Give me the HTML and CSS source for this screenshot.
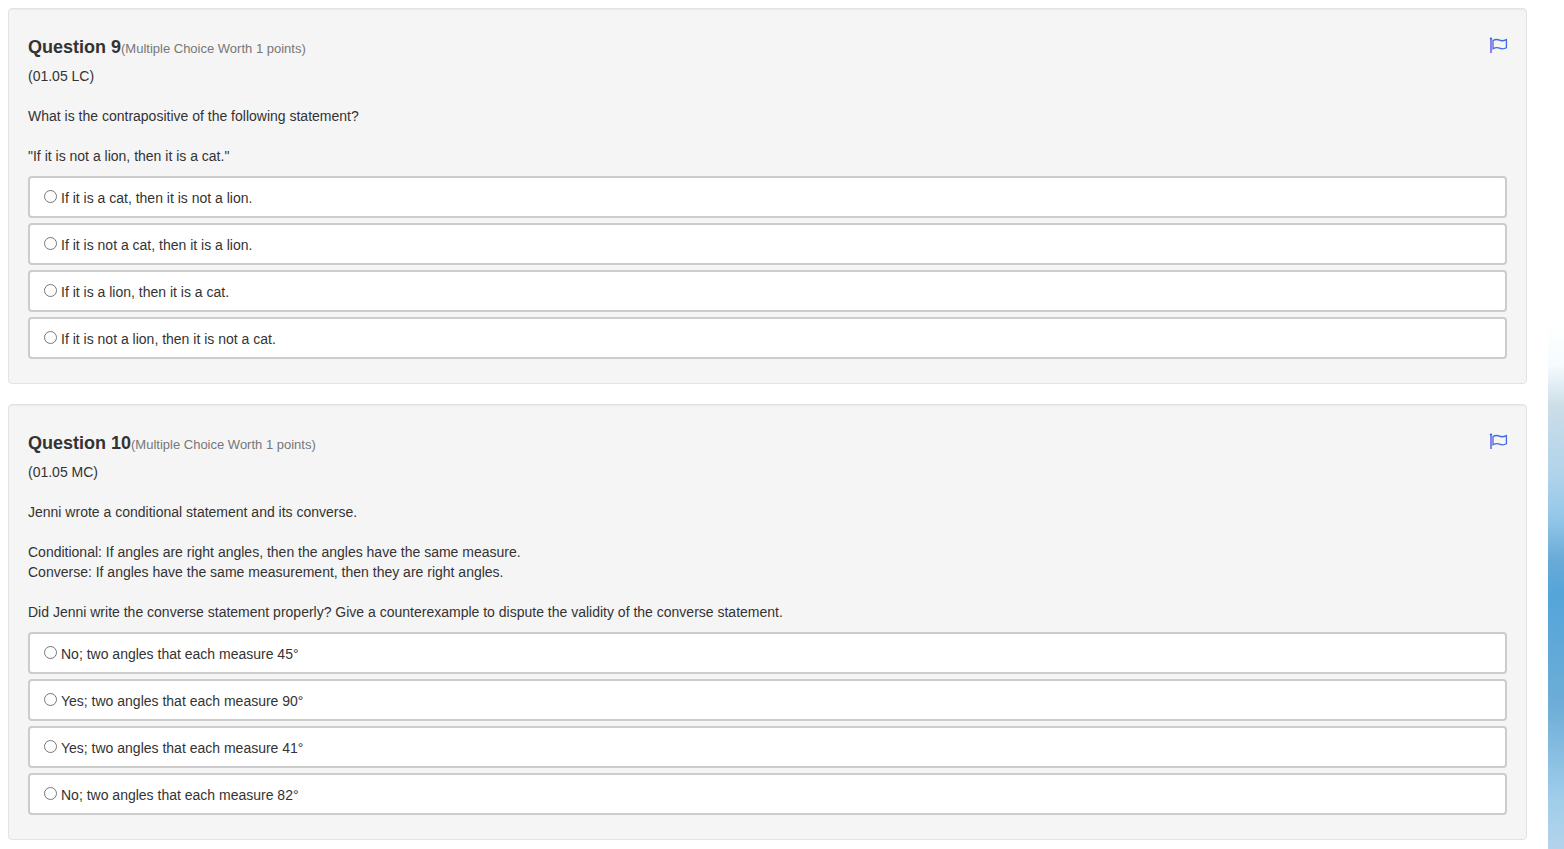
FILE: index.html
```
<!DOCTYPE html>
<html lang="en">

<head>
  <meta charset="UTF-8">
  <meta name="viewport" content="width=device-width, initial-scale=1.0">
  <title>Exam</title>
  <link rel="stylesheet" href="styles.css">
</head>

<body>
  <form class="exam">
    <section class="well">
      <header class="question-header">
        <h4>Question 9<small>(Multiple Choice Worth 1 points)</small></h4>
        <button type="button" class="flag" aria-label="Flag question 9">
          <svg width="18" height="16" viewBox="0 0 18 16">
            <path class="pole" d="M2 1V16" />
            <path d="M4 3.5C6.5 2 8.5 2.3 10.5 3.2S15 3.8 17.4 2.6V10.8C15 12.2 12.5 12 10.5 11.2S6.5 10.4 4 11.8Z" />
            <circle cx="2" cy="1.6" r="1.2" />
          </svg>
        </button>
      </header>
      <div class="question-text">
        (01.05 LC)<br><br>
        What is the contrapositive of the following statement?<br><br>
        "If it is not a lion, then it is a cat."
      </div>
      <label class="answer"><input type="radio" name="q9" value="a">If it is a cat, then it is not a lion.</label>
      <label class="answer"><input type="radio" name="q9" value="b">If it is not a cat, then it is a lion.</label>
      <label class="answer"><input type="radio" name="q9" value="c">If it is a lion, then it is a cat.</label>
      <label class="answer"><input type="radio" name="q9" value="d">If it is not a lion, then it is not a cat.</label>
    </section>

    <section class="well">
      <header class="question-header">
        <h4>Question 10<small>(Multiple Choice Worth 1 points)</small></h4>
        <button type="button" class="flag" aria-label="Flag question 10">
          <svg width="18" height="16" viewBox="0 0 18 16">
            <path class="pole" d="M2 1V16" />
            <path d="M4 3.5C6.5 2 8.5 2.3 10.5 3.2S15 3.8 17.4 2.6V10.8C15 12.2 12.5 12 10.5 11.2S6.5 10.4 4 11.8Z" />
            <circle cx="2" cy="1.6" r="1.2" />
          </svg>
        </button>
      </header>
      <div class="question-text">
        (01.05 MC)<br><br>
        Jenni wrote a conditional statement and its converse.<br><br>
        Conditional: If angles are right angles, then the angles have the same measure.<br>
        Converse: If angles have the same measurement, then they are right angles.<br><br>
        Did Jenni write the converse statement properly? Give a counterexample to dispute the validity of the converse statement.
      </div>
      <label class="answer"><input type="radio" name="q10" value="a">No; two angles that each measure 45°</label>
      <label class="answer"><input type="radio" name="q10" value="b">Yes; two angles that each measure 90°</label>
      <label class="answer"><input type="radio" name="q10" value="c">Yes; two angles that each measure 41°</label>
      <label class="answer"><input type="radio" name="q10" value="d">No; two angles that each measure 82°</label>
    </section>
  </form>
  <div class="sky"></div>
</body>

</html>
```

FILE: styles.css
```
* {
  box-sizing: border-box;
}

body {
  display: flex;
  min-height: 100vh;
  margin: 0;
  background-color: #fff;
  color: #333;
  font-family: "Liberation Sans", Arial, sans-serif;
  font-size: 14px;
  line-height: 20px;
}

.exam {
  flex: 1;
  padding: 8px 21px 0 8px;
}

.well {
  padding: 19px;
  border: 1px solid #e3e3e3;
  border-radius: 4px;
  background-color: #f5f5f5;
  box-shadow: inset 0 1px 1px rgba(0, 0, 0, 0.05);
}

.well + .well {
  margin-top: 20px;
}

.question-header {
  display: flex;
  align-items: flex-start;
  justify-content: space-between;
  padding: 9px 0 7px;
}

h4 {
  margin: 0;
  font-size: 18px;
  line-height: 20px;
}

h4 small {
  color: #777;
  font-size: 13px;
  font-weight: normal;
}

.flag {
  display: flex;
  margin: 0;
  padding: 0;
  border: none;
  background: none;
  cursor: pointer;
}

.flag svg {
  overflow: visible;
  fill: none;
  stroke: #4169e1;
  stroke-width: 1.3;
}

.flag circle {
  fill: #4169e1;
  stroke: none;
}

.flag .pole {
  stroke: #6a5aee;
  stroke-width: 1.5;
}

.question-text {
  margin-bottom: 10px;
}

.answer {
  display: flex;
  align-items: center;
  margin-bottom: 5px;
  padding: 10px 14px 8px;
  border: 2px solid #ccc;
  border-radius: 4px;
  background-color: #fff;
  cursor: pointer;
}

.answer input {
  width: 13px;
  height: 13px;
  margin: 0 4px 4px 0;
}

.sky {
  width: 16px;
  background: linear-gradient(#fff 38%, #f5fbfe 43%, #cbdde8 48%, #b0d3eb 56%, #93c7e8 61%, #68aad8 66%, #54a5da 70%, #6dadd7 83%, #9fcdea 94%, #b4d3eb 100%);
}
```
